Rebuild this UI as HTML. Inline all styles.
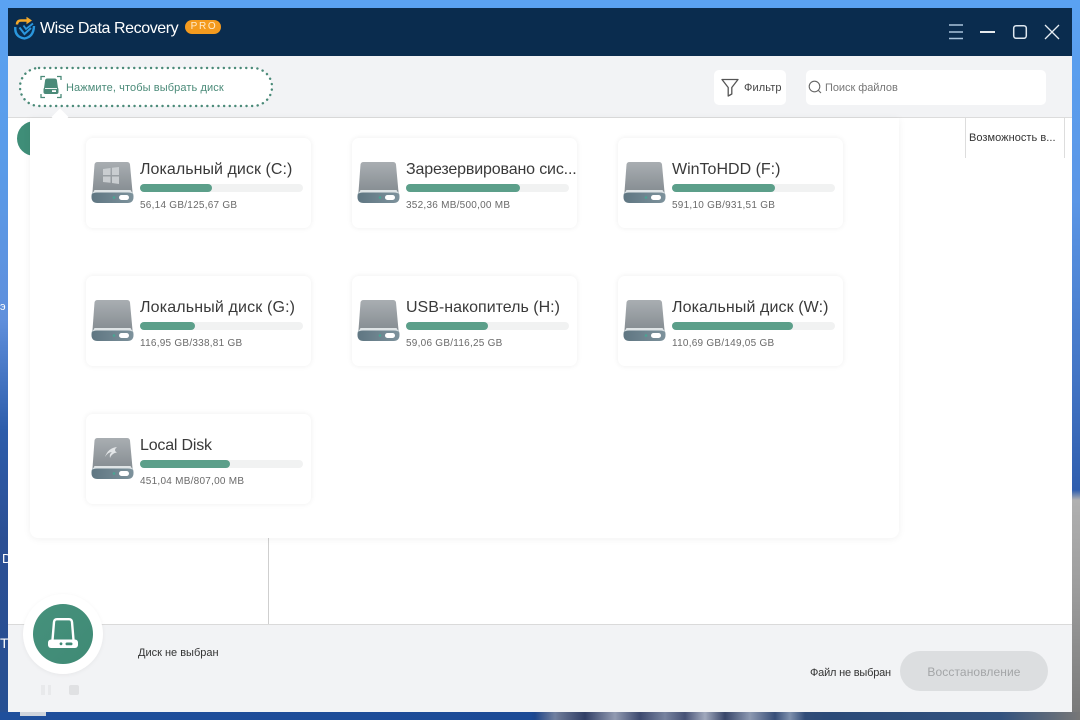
<!DOCTYPE html>
<html lang="ru"><head><meta charset="utf-8"><title>Wise Data Recovery</title>
<style>
*{box-sizing:border-box;margin:0;padding:0}
html,body{width:1080px;height:720px;overflow:hidden}
body{position:relative;font-family:"Liberation Sans",sans-serif;background:linear-gradient(180deg,#5aa2f2 0,#5a9be8 170px,#5f8fdc 320px,#2d5dab 430px,#2b4f94 540px,#264f92 720px)}
.a{position:absolute}
#r{left:1072px;top:0;width:8px;height:720px;background:linear-gradient(180deg,#5aa2f2 0,#5b96e6 200px,#3f70c0 400px,#2f5eae 490px,#b0b0b0 500px,#9a9a9a 600px,#777 720px)}
#t{left:0;top:0;width:1080px;height:8px;background:#5aa2f2}
#b{left:0;top:712px;width:1080px;height:8px;background:linear-gradient(90deg,#1f4f9c 0,#1c4a96 530px,#2c3a62 560px,#4a5578 700px,#2b4a78 830px,#33527e 1000px,#777 1080px)}
#city{left:535px;top:712px;width:270px;height:8px;background:linear-gradient(90deg,transparent 0,rgba(200,210,225,.45) 20px,transparent 50px,rgba(220,225,235,.55) 80px,transparent 105px,rgba(200,210,225,.4) 130px,transparent 150px,rgba(220,225,235,.6) 170px,rgba(30,40,70,.3) 190px,rgba(220,225,235,.5) 215px,transparent 240px,rgba(200,210,225,.5) 255px,transparent 270px)}
#win{left:8px;top:8px;width:1064px;height:704px;background:#fff;overflow:hidden}
#title{left:8px;top:8px;width:1064px;height:48px;background:#0a2c4e}
#tool{left:8px;top:56px;width:1064px;height:62px;background:#f2f3f5;border-bottom:1px solid #dcdcdc}
#foot{left:8px;top:624px;width:1064px;height:88px;background:#f2f3f5;border-top:1px solid #dadada}
#pop{left:30px;top:118px;width:869px;height:420px;background:#fff;border-radius:0 0 8px 8px;box-shadow:0 1px 8px rgba(0,0,0,.06)}
.card{position:absolute;width:225px;height:90px;background:#fff;border-radius:7px;box-shadow:0 0 6px rgba(0,0,0,.07)}
.card svg{position:absolute;left:5px;top:23px}
.nm{position:absolute;left:54px;top:22px;font-size:16px;line-height:20px;color:#3a3a3a;white-space:nowrap}
.tr{position:absolute;left:54px;top:46px;width:163px;height:8px;border-radius:4px;background:#f1f2f2}
.tr i{display:block;height:8px;border-radius:4px;background:#5c9f8a}
.sz{position:absolute;left:54px;top:61px;font-size:10px;line-height:14px;color:#6a6a6a;white-space:nowrap;letter-spacing:.25px}
</style></head><body>
<svg width="0" height="0" style="position:absolute"><defs>
<linearGradient id="g1" x1="0" y1="0" x2="0" y2="1"><stop offset="0" stop-color="#a9aeb2"/><stop offset="1" stop-color="#868d92"/></linearGradient>
<linearGradient id="g2" x1="0" y1="0" x2="1" y2="0"><stop offset="0" stop-color="#5f7682"/><stop offset="1" stop-color="#7d929c"/></linearGradient>
<g id="drive"><path d="M3.500 3.500Q4 1 6.500 1H36Q38.500 1 39 3.500L41.500 31H1.500Z" fill="url(#g1)"/><path d="M4 29.500H39Q42.500 31 42.500 35V36Q42.500 42 36.500 42H6.500Q.5 42 .5 36V35Q.5 31 4 29.500Z" fill="url(#g2)"/><path d="M3.500 29L.8 33.500Q2 31.500 6 31.500H37Q41 31.500 42.200 33.500L39.500 29Z" fill="#dfe4e6"/><circle cx="23" cy="36.500" r="1.300" fill="#49a593"/><rect x="28" y="34" width="10" height="5" rx="2.500" fill="#fff"/></g>
</defs></svg>
<div class="a" id="t"></div><div class="a" id="r"></div><div class="a" id="b"></div><div class="a" id="city"></div>
<div class="a" style="left:0;top:300px;color:#fff;font-size:11px;line-height:14px">э</div>
<div class="a" style="left:2px;top:552px;color:#fff;font-size:13px;line-height:14px">D</div>
<div class="a" style="left:0;top:635px;color:#fff;font-size:14px;line-height:16px">T</div>
<div class="a" style="left:20px;top:712px;width:26px;height:4px;background:#cfd4dc"></div>
<div class="a" id="win"></div>
<div class="a" id="title"></div>
<svg class="a" style="left:13px;top:16px" width="24" height="24" viewBox="0 0 24 24" fill="none"><path d="M4 8.500Q4 4.500 8 4.500H14" stroke="#f4a92a" stroke-width="2.400"/><path d="M13.500 .8L19 4.500L13.500 8.200Z" fill="#f4a92a"/><path d="M2.300 11Q1.500 21 11.500 22.500Q20.500 21 21 10" stroke="#2a97dd" stroke-width="2.400"/><path d="M6.500 11.500L11.500 18L18 12" stroke="#2a97dd" stroke-width="2"/><path d="M10.500 9.500L13 13L20 7.500" stroke="#2a97dd" stroke-width="1.800"/></svg>
<div class="a" style="left:40px;top:18px;color:#fff;font-size:16px;line-height:22px;white-space:nowrap;letter-spacing:-.42px">Wise Data Recovery</div>
<div class="a" style="left:185px;top:20px;width:36px;height:14px;border-radius:7px;background:#f49b1f;color:#ffeccf;font-size:10px;line-height:14px;text-align:center;letter-spacing:1.700px;text-indent:2px">PRO</div>
<svg class="a" style="left:940px;top:16px" width="125" height="32" viewBox="0 0 125 32" fill="none"><path d="M9 9H23M9 16H23M9 22.500H23" stroke="#a9c4dc" stroke-width="1.500"/><path d="M40 16H55" stroke="#fff" stroke-width="1.800"/><rect x="73.700" y="9.700" width="12.600" height="12.600" rx="2.500" stroke="#dfe8f0" stroke-width="1.500"/><path d="M105 9L119 23M119 9L105 23" stroke="#e6edf3" stroke-width="1.300"/></svg>
<div class="a" id="tool"></div>
<div class="a" style="left:18px;top:66px;width:256px;height:42px"><svg width="256" height="42"><rect x="2" y="2" width="252" height="38" rx="19" fill="#fff" stroke="#4a8a78" stroke-width="2.400" stroke-dasharray=".1 5.500" stroke-linecap="round"/></svg></div>
<svg class="a" style="left:40px;top:75px" width="22" height="24" viewBox="0 0 22 24" fill="none"><path d="M1 5V1.500H5M17 1.500H21V5M1 19V22.500H5M17 22.500H21V19" stroke="#4a8a78" stroke-width="1.300"/><path d="M5 6Q5 3.500 7.500 3.500H14.500Q17 3.500 17 6L18 13H4Z" fill="#4a8a78"/><rect x="3.500" y="12.500" width="15" height="6.500" rx="2" fill="#4a8a78"/><path d="M5 13.500H17" stroke="#fff" stroke-width=".9"/><rect x="12" y="15.200" width="4" height="1.800" fill="#fff"/></svg>
<div class="a" style="left:66px;top:81px;font-size:11px;line-height:14px;color:#4a8a78;white-space:nowrap;letter-spacing:.1px">Нажмите, чтобы выбрать диск</div>
<div class="a" style="left:714px;top:70px;width:72px;height:35px;background:#fff;border-radius:5px"></div>
<svg class="a" style="left:720px;top:78px" width="20" height="20" viewBox="0 0 20 20" fill="none"><path d="M2 1.500H18L11.800 9.500V16L8.200 18V9.500Z" stroke="#555" stroke-width="1.300" stroke-linejoin="round"/></svg>
<div class="a" style="left:744px;top:81px;font-size:11px;line-height:14px;color:#444;letter-spacing:.1px">Фильтр</div>
<div class="a" style="left:806px;top:70px;width:240px;height:35px;background:#fff;border-radius:5px"></div>
<svg class="a" style="left:808px;top:80px" width="15" height="15" viewBox="0 0 15 15" fill="none"><circle cx="6.500" cy="6.500" r="5.300" stroke="#666" stroke-width="1.100"/><path d="M10.500 10.500L13 13" stroke="#666" stroke-width="1.100"/></svg>
<div class="a" style="left:825px;top:81px;font-size:11px;line-height:14px;color:#777;letter-spacing:-.05px">Поиск файлов</div>
<div class="a" style="left:17px;top:121px;width:35px;height:35px;border-radius:50%;background:#3f8e78"></div>
<div class="a" style="left:965px;top:118px;width:100px;height:40px;border-left:1px solid #ddd;border-right:1px solid #ddd;font-size:11px;line-height:41px;padding-left:3px;color:#333;white-space:nowrap;letter-spacing:.05px">Возможность в...</div>
<div class="a" style="left:268px;top:538px;width:1px;height:86px;background:#cfcfcf"></div>
<div class="a" id="foot"></div>
<div class="a" id="pop">
<div class="a" style="left:24px;top:-7px;width:12px;height:12px;background:#fff;transform:rotate(45deg)"></div>
<div class="card" style="left:56px;top:20px"><svg width="44" height="43" viewBox="0 0 44 43"><use href="#drive"/><path d="M12 8L19.500 7V14H12ZM21 6.800L28 6V14H21ZM12 15.500H19.500V21.800L12 21ZM21 15.500H28V23L21 22Z" fill="#c9cdd0"/></svg><div class="nm" style="letter-spacing:.05px">Локальный диск (C:)</div><div class="tr"><i style="width:72px"></i></div><div class="sz">56,14 GB/125,67 GB</div></div>
<div class="card" style="left:322px;top:20px"><svg width="44" height="43" viewBox="0 0 44 43"><use href="#drive"/></svg><div class="nm" style="letter-spacing:-.15px">Зарезервировано сис...</div><div class="tr"><i style="width:114px"></i></div><div class="sz">352,36 MB/500,00 MB</div></div>
<div class="card" style="left:588px;top:20px"><svg width="44" height="43" viewBox="0 0 44 43"><use href="#drive"/></svg><div class="nm">WinToHDD (F:)</div><div class="tr"><i style="width:103px"></i></div><div class="sz">591,10 GB/931,51 GB</div></div>
<div class="card" style="left:56px;top:158px"><svg width="44" height="43" viewBox="0 0 44 43"><use href="#drive"/></svg><div class="nm" style="letter-spacing:.15px">Локальный диск (G:)</div><div class="tr"><i style="width:55px"></i></div><div class="sz">116,95 GB/338,81 GB</div></div>
<div class="card" style="left:322px;top:158px"><svg width="44" height="43" viewBox="0 0 44 43"><use href="#drive"/></svg><div class="nm">USB-накопитель (H:)</div><div class="tr"><i style="width:82px"></i></div><div class="sz">59,06 GB/116,25 GB</div></div>
<div class="card" style="left:588px;top:158px"><svg width="44" height="43" viewBox="0 0 44 43"><use href="#drive"/></svg><div class="nm" style="letter-spacing:.1px">Локальный диск (W:)</div><div class="tr"><i style="width:121px"></i></div><div class="sz">110,69 GB/149,05 GB</div></div>
<div class="card" style="left:56px;top:296px"><svg width="44" height="43" viewBox="0 0 44 43"><use href="#drive"/><path d="M26 10Q17 11 14 20Q17 15 21 15Q18 17 19 21Q21 16 26 15.500Q22 13.500 26 10Z" fill="#e2e5e7"/></svg><div class="nm" style="letter-spacing:-.2px">Local Disk</div><div class="tr"><i style="width:90px"></i></div><div class="sz">451,04 MB/807,00 MB</div></div>
</div>
<div class="a" style="left:23px;top:594px;width:80px;height:80px;border-radius:50%;background:#fff;box-shadow:0 1px 5px rgba(0,0,0,.05)"></div>
<div class="a" style="left:33px;top:604px;width:60px;height:60px;border-radius:50%;background:linear-gradient(135deg,#46917c,#3f8a75)"></div>
<svg class="a" style="left:47px;top:617px" width="32" height="34" viewBox="0 0 32 34" fill="none"><path d="M5.500 23L7 5Q7.300 2.200 10 2.200H22Q24.700 2.200 25 5L26.500 23" stroke="#fff" stroke-width="2.400"/><rect x="1" y="22.500" width="30" height="8.500" rx="3" fill="#fff"/><circle cx="14" cy="26.800" r="1.400" fill="#3f8a75"/><rect x="18.500" y="25.500" width="7" height="2.800" rx="1.400" fill="#3f8a75"/></svg>
<div class="a" style="left:41px;top:685px;width:3.500px;height:10px;background:#e8e9eb"></div>
<div class="a" style="left:47.500px;top:685px;width:3.500px;height:10px;background:#e8e9eb"></div>
<div class="a" style="left:69px;top:685px;width:10px;height:10px;border-radius:2px;background:#e0e1e3"></div>
<div class="a" style="left:138px;top:646px;font-size:11px;line-height:14px;color:#333;white-space:nowrap">Диск не выбран</div>
<div class="a" style="left:810px;top:666px;font-size:11px;line-height:14px;color:#333;white-space:nowrap;letter-spacing:-.2px">Файл не выбран</div>
<div class="a" style="left:900px;top:651px;width:148px;height:40px;border-radius:20px;background:#dcdee0;color:#a3a5a7;font-size:12px;line-height:42px;text-align:center;letter-spacing:.1px">Восстановление</div>
</body></html>
